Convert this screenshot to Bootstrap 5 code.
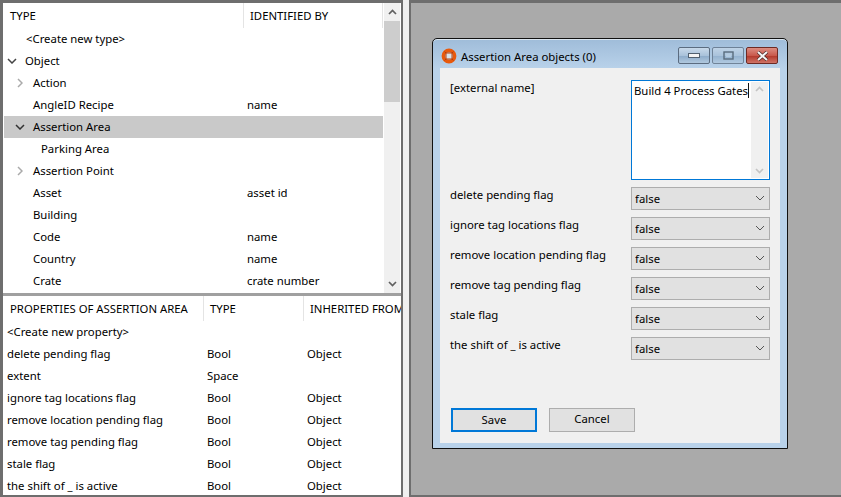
<!DOCTYPE html>
<html><head><meta charset="utf-8">
<link href="https://cdn.jsdelivr.net/npm/bootstrap@5.3.0/dist/css/bootstrap.min.css" rel="stylesheet">
<style>
html,body{height:100%;overflow:hidden}
body{width:841px;height:497px;font:11.35px/22px "Noto Sans",sans-serif;color:#000;background:#f0f0f0}
.shell{height:497px}
.leftpane{width:403px;border:solid #6e6e6e;border-width:3px 2px 2px 3px;background:#fff;box-sizing:border-box}
.gutter{width:6px;background:#f0f0f0}
.canvas{flex:1;background:#aaa;border:solid #6e6e6e;border-width:3px 0 2px 2px;padding-top:35px;padding-left:21px}
.toppanel{height:290px;border-bottom:3px solid #a0a0a0;box-sizing:content-box;overflow:hidden}
.treearea{width:380px;padding-left:1px;flex:none}
.hdr{height:25px;line-height:26px}
.hcell{padding-left:6px;border-right:1px solid #e4e4e4;height:25px;white-space:nowrap;overflow:hidden}
.hc1{width:240px}.hc2{width:139px}
.trow{height:22px;line-height:23.5px;white-space:nowrap}
.trow.sel{background:#c9c9c9}
.cellname{width:243px;display:flex;align-items:center;flex:none}
.valcell{line-height:22px}
.tw{width:14px;height:22px;flex:none;display:flex;align-items:center;justify-content:center}
.tw-a{margin-left:1px}.tw-b{margin-left:9px}
.tx{margin-left:6px}
.pl-a{padding-left:29px}.pl-b{padding-left:37px}.pl-c{padding-left:22px}
.sb{width:16px;background:#f0f0f0;margin-left:1px;flex:none}
.sbtop{height:18px;display:flex;align-items:center;justify-content:center}
.sbthumb{height:81px;background:#cdcdcd}
.sbbot{height:18px;display:flex;align-items:center;justify-content:center}
.botpanel{flex:1;overflow:hidden}
.ph1{width:201px;padding-left:7px}.ph2{width:100px}.ph3{width:97px;border-right:0}
.prow{height:22px;line-height:22px;padding-left:4px;white-space:nowrap}
.p1{width:200px}.p2{width:100px}
.dlgwin{width:356px;height:411px;border:1px solid #111;border-radius:5px 5px 0 0;padding:0 7px 6px 7px;background:linear-gradient(#9fbcd9 0,#b9d2ea 30px,#b9d2ea 100%);box-shadow:inset 0 1px 0 #dbe6f0}
.dlgtitle{height:29px;line-height:36px}
.dlgicon{margin:9px 4px 0 1px;flex:none}
.wbtns{margin-right:2px}
.wb{height:17px;margin-top:8px;border:1px solid #5b6c80;border-radius:2px;display:flex;align-items:center;justify-content:center;background:linear-gradient(#c8d9ea 0,#a9c2da 50%,#8fadcb 55%,#b0c8de 100%)}
.wb-min{width:32px}.wb-max{width:32px;opacity:.75;margin-left:2px}
.wb-close{width:32px;margin-left:2px;background:linear-gradient(#dc8d82 0,#c9594c 50%,#b43a2d 55%,#cf7467 100%);border-color:#6d2a24}
.dlgbody{height:375px;background:#f0f0f0;padding:12px 10px 0 10px}
.fname{width:181px;flex:none;padding-top:0;line-height:16px}
.frow{height:30px}
.first{height:107px}
.ta{width:139px;height:100px;position:relative;background:#fff;border:1px solid #0078d7;border-radius:0;padding:1px 0 0 2px;line-height:18px}
.tasb{position:absolute;right:1px;top:1px;bottom:1px;width:17px;background:#f0f0f0;display:flex;flex-direction:column;justify-content:space-between;align-items:center;padding:4px 0}
.caret{border-right:1px solid #111;display:inline-block;height:15px;vertical-align:-3px}
.dd{width:139px;height:23px;border:1px solid #adadad;border-radius:0;background-color:#e1e1e1;font-size:11.35px;line-height:20px;padding:0 20px 0 3px;color:#000;--bs-form-select-bg-img:none;box-shadow:none}
.dlgbtn{width:86px;height:24px;border:1px solid #adadad;background:#e1e1e1;border-radius:0;font-size:11.35px;line-height:20px;padding:0 0 2px;color:#000}
.dlgbtn.def{border:2px solid #0078d7}
.btnrow{margin-top:41px;padding-left:1px;gap:12px}
.ddc{position:absolute;right:5px;top:8px}
.ddw{position:relative;width:139px}
</style></head><body>
<div class="shell d-flex">
 <div class="leftpane d-flex flex-column">
  <div class="toppanel d-flex">
   <div class="treearea">
    <div class="hdr d-flex"><div class="hcell hc1">TYPE</div><div class="hcell hc2">IDENTIFIED BY</div></div>
    <div class="trow d-flex"><div class="cellname pl-c">&lt;Create new type&gt;</div></div>
    <div class="trow d-flex"><div class="cellname"><span class="tw tw-a"><svg width="10" height="6" viewBox="0 0 10 6"><path d="M1 1l4 4 4-4" fill="none" stroke="#444" stroke-width="1.5"/></svg></span><span class="tx">Object</span></div></div>
    <div class="trow d-flex"><div class="cellname"><span class="tw tw-b"><svg width="6" height="10" viewBox="0 0 6 10"><path d="M1 1l4 4-4 4" fill="none" stroke="#aaa" stroke-width="1.5"/></svg></span><span class="tx">Action</span></div></div>
    <div class="trow d-flex"><div class="cellname pl-a">AngleID Recipe</div><div class="valcell">name</div></div>
    <div class="trow sel d-flex"><div class="cellname"><span class="tw tw-b"><svg width="10" height="6" viewBox="0 0 10 6"><path d="M1 1l4 4 4-4" fill="none" stroke="#333" stroke-width="1.5"/></svg></span><span class="tx">Assertion Area</span></div></div>
    <div class="trow d-flex"><div class="cellname pl-b">Parking Area</div></div>
    <div class="trow d-flex"><div class="cellname"><span class="tw tw-b"><svg width="6" height="10" viewBox="0 0 6 10"><path d="M1 1l4 4-4 4" fill="none" stroke="#aaa" stroke-width="1.5"/></svg></span><span class="tx">Assertion Point</span></div></div>
    <div class="trow d-flex"><div class="cellname pl-a">Asset</div><div class="valcell">asset id</div></div>
    <div class="trow d-flex"><div class="cellname pl-a">Building</div></div>
    <div class="trow d-flex"><div class="cellname pl-a">Code</div><div class="valcell">name</div></div>
    <div class="trow d-flex"><div class="cellname pl-a">Country</div><div class="valcell">name</div></div>
    <div class="trow d-flex"><div class="cellname pl-a">Crate</div><div class="valcell">crate number</div></div>
   </div>
   <div class="sb d-flex flex-column">
    <div class="sbtop"><svg width="9" height="6" viewBox="0 0 9 6"><path d="M1 5l3.5-3.5L8 5" fill="none" stroke="#606060" stroke-width="1.7"/></svg></div>
    <div class="sbthumb"></div>
    <div class="flex-grow-1"></div>
    <div class="sbbot"><svg width="9" height="6" viewBox="0 0 9 6"><path d="M1 1l3.5 3.5L8 1" fill="none" stroke="#606060" stroke-width="1.7"/></svg></div>
   </div>
  </div>
  <div class="botpanel">
   <div class="hdr d-flex"><div class="hcell ph1">PROPERTIES OF ASSERTION AREA</div><div class="hcell ph2">TYPE</div><div class="hcell ph3">INHERITED FROM</div></div>
   <div class="prow">&lt;Create new property&gt;</div>
   <div class="prow d-flex"><div class="p1">delete pending flag</div><div class="p2">Bool</div><div>Object</div></div>
   <div class="prow d-flex"><div class="p1">extent</div><div class="p2">Space</div></div>
   <div class="prow d-flex"><div class="p1">ignore tag locations flag</div><div class="p2">Bool</div><div>Object</div></div>
   <div class="prow d-flex"><div class="p1">remove location pending flag</div><div class="p2">Bool</div><div>Object</div></div>
   <div class="prow d-flex"><div class="p1">remove tag pending flag</div><div class="p2">Bool</div><div>Object</div></div>
   <div class="prow d-flex"><div class="p1">stale flag</div><div class="p2">Bool</div><div>Object</div></div>
   <div class="prow d-flex"><div class="p1">the shift of _ is active</div><div class="p2">Bool</div><div>Object</div></div>
  </div>
 </div>
 <div class="gutter"></div>
 <div class="canvas">
  <div class="dlgwin">
   <div class="dlgtitle d-flex">
    <svg class="dlgicon" width="16" height="16" viewBox="0 0 16 16"><circle cx="8" cy="8" r="5.6" fill="none" stroke="#e8590c" stroke-width="3.6"/><path d="M3.5 3.5l9 9M12.5 3.5l-9 9" stroke="#a9360a" stroke-width=".8"/><rect x="5" y="5" width="6" height="6" fill="#d8e3ea" stroke="#b8400c"/></svg>
    <span class="flex-grow-1">Assertion Area objects (0)</span>
    <div class="wbtns d-flex align-items-start">
     <div class="wb wb-min"><svg width="12" height="5" viewBox="0 0 12 5"><rect x=".5" y=".5" width="11" height="4" fill="#f4f4f4" stroke="#51606f"/></svg></div>
     <div class="wb wb-max"><svg width="11" height="9" viewBox="0 0 11 9"><rect x="1" y="1" width="9" height="7" fill="none" stroke="#3e4d5c" stroke-width="1.4"/><rect x="3" y="3" width="5" height="3" fill="#b7cce0"/></svg></div>
     <div class="wb wb-close"><svg width="13" height="10" viewBox="0 0 13 10"><path d="M2 1l9 8M11 1l-9 8" stroke="#4a2a28" stroke-width="3.4"/><path d="M2 1l9 8M11 1l-9 8" stroke="#f5f5f5" stroke-width="2"/></svg></div>
    </div>
   </div>
   <div class="dlgbody">
    <div class="first d-flex"><div class="fname">[external name]</div>
     <div class="ta">Build 4 Process Gates<span class="caret"></span>
      <div class="tasb"><svg width="9" height="6" viewBox="0 0 9 6"><path d="M1 5l3.5-3.5L8 5" fill="none" stroke="#c4c4c4" stroke-width="1.7"/></svg><svg width="9" height="6" viewBox="0 0 9 6"><path d="M1 1l3.5 3.5L8 1" fill="none" stroke="#c4c4c4" stroke-width="1.7"/></svg></div>
     </div>
    </div>
    <div class="frow d-flex"><div class="fname">delete pending flag</div><div class="ddw"><select class="form-select dd"><option>false</option></select><svg class="ddc" width="10" height="6" viewBox="0 0 10 6"><path d="M1 1l4 4 4-4" fill="none" stroke="#555"/></svg></div></div>
    <div class="frow d-flex"><div class="fname">ignore tag locations flag</div><div class="ddw"><select class="form-select dd"><option>false</option></select><svg class="ddc" width="10" height="6" viewBox="0 0 10 6"><path d="M1 1l4 4 4-4" fill="none" stroke="#555"/></svg></div></div>
    <div class="frow d-flex"><div class="fname">remove location pending flag</div><div class="ddw"><select class="form-select dd"><option>false</option></select><svg class="ddc" width="10" height="6" viewBox="0 0 10 6"><path d="M1 1l4 4 4-4" fill="none" stroke="#555"/></svg></div></div>
    <div class="frow d-flex"><div class="fname">remove tag pending flag</div><div class="ddw"><select class="form-select dd"><option>false</option></select><svg class="ddc" width="10" height="6" viewBox="0 0 10 6"><path d="M1 1l4 4 4-4" fill="none" stroke="#555"/></svg></div></div>
    <div class="frow d-flex"><div class="fname">stale flag</div><div class="ddw"><select class="form-select dd"><option>false</option></select><svg class="ddc" width="10" height="6" viewBox="0 0 10 6"><path d="M1 1l4 4 4-4" fill="none" stroke="#555"/></svg></div></div>
    <div class="frow d-flex"><div class="fname">the shift of _ is active</div><div class="ddw"><select class="form-select dd"><option>false</option></select><svg class="ddc" width="10" height="6" viewBox="0 0 10 6"><path d="M1 1l4 4 4-4" fill="none" stroke="#555"/></svg></div></div>
    <div class="btnrow d-flex"><button class="btn dlgbtn def">Save</button><button class="btn dlgbtn">Cancel</button></div>
   </div>
  </div>
 </div>
</div>
</body></html>
